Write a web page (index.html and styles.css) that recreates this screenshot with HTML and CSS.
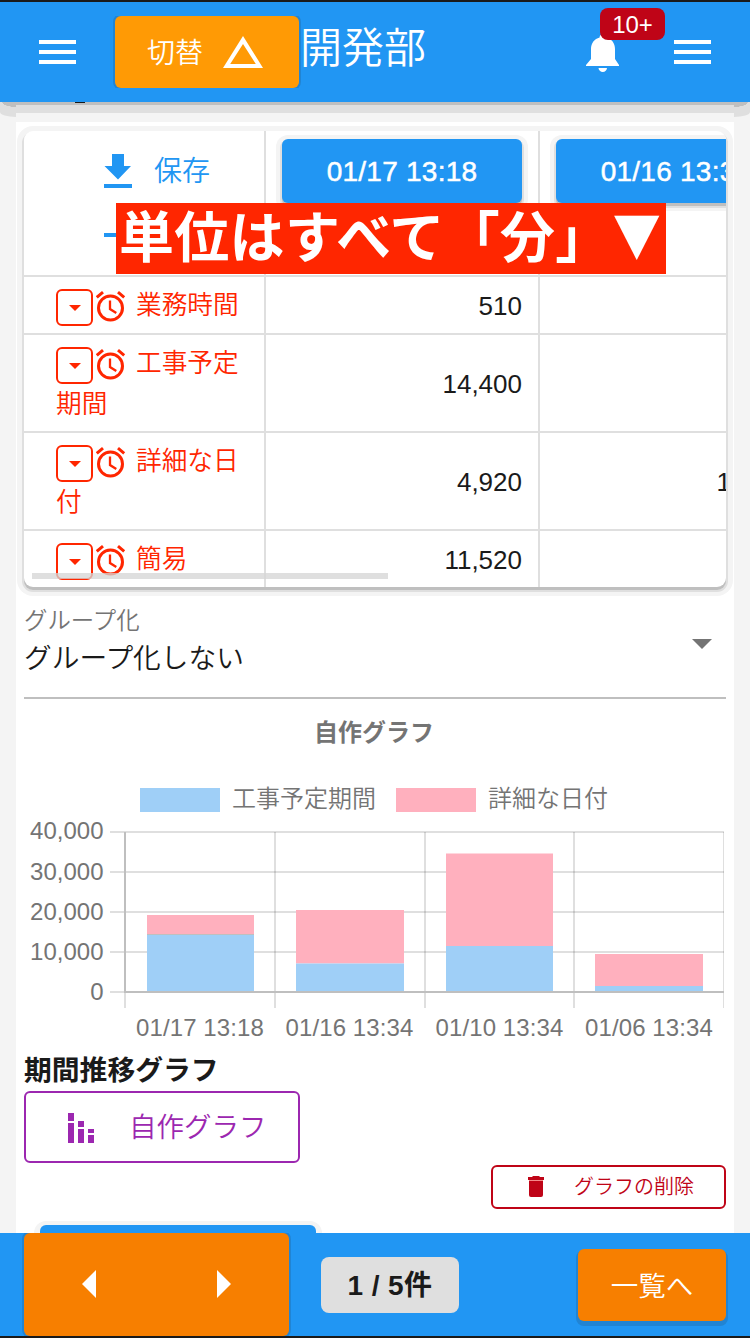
FILE: index.html
```html
<!DOCTYPE html>
<html lang="ja">
<head>
<meta charset="utf-8">
<title>開発部</title>
<link rel="stylesheet" href="styles.css">
</head>
<body>
<svg class="defs" aria-hidden="true">
  <symbol id="alarm" viewBox="0 0 30 32">
    <path d="M.8 7.400 7 2.200M28.200 7.400 22 2.200" fill="none" stroke="currentColor" stroke-width="3"/>
    <circle cx="14.500" cy="18" r="12" fill="none" stroke="currentColor" stroke-width="3"/>
    <path d="M14 10.500v8.500l6.300 3.900" fill="none" stroke="currentColor" stroke-width="2.300"/>
  </symbol>
  <symbol id="caret" viewBox="0 0 12 6"><path d="M0 0h12L6 6z" fill="currentColor"/></symbol>
  <symbol id="burger" viewBox="0 0 37 24"><path d="M0 0h37v4H0zM0 10h37v4H0zM0 20h37v4H0z" fill="currentColor"/></symbol>
</svg>
<header class="appbar">
  <svg class="burger"><use href="#burger"/></svg>
  <button class="switch"><span>切替</span>
    <svg width="40" height="32" viewBox="0 0 40 32"><path fill="#fff" fill-rule="evenodd" d="M20 0 40 32H0zM20 8 7.2 28H32.8z"/></svg>
  </button>
  <h1 class="title">開発部</h1>
  <div class="bell">
    <svg width="34" height="40" viewBox="0 0 34 40"><path fill="#fff" d="M17 0c-2 0-3.4 1.5-3.4 3.4C8.4 4.8 5 9 5 15v10L0 31v1h33v-1l-4-6V15c0-6-3.400-10.200-8.600-11.600C20.400 1.500 19 0 17 0zM12.500 34h8.500c0 2-2 4-4.200 4s-4.300-2-4.300-4z"/></svg>
    <span class="badge">10+</span>
  </div>
  <svg class="burger"><use href="#burger"/></svg>
</header>
<main class="page">
  <div class="edge"><i class="clip"></i></div>
  <section class="card">
    <div class="table-wrap">
      <div class="table">
        <div class="cell head tools">
          <a class="tool"><svg width="28" height="34" viewBox="0 0 28 34"><path fill="currentColor" d="M8 0h12v12h7L14 25.500.500 12H8zM0 30h28v4H0z"/></svg><span>保存</span></a>
          <a class="tool"><svg width="28" height="34" viewBox="0 0 28 34"><path fill="currentColor" d="M0 15h28v4H0z"/></svg></a>
        </div>
        <div class="cell head"><button class="date">01/17 13:18</button></div>
        <div class="cell head"><button class="date">01/16 13:34</button></div>

        <div class="cell label"><span class="drop"><svg><use href="#caret"/></svg></span><svg class="alarm"><use href="#alarm"/></svg>業務時間</div>
        <div class="cell num">510</div><div class="cell num"></div>

        <div class="cell label"><span class="drop"><svg><use href="#caret"/></svg></span><svg class="alarm"><use href="#alarm"/></svg>工事予定期間</div>
        <div class="cell num">14,400</div><div class="cell num"></div>

        <div class="cell label"><span class="drop"><svg><use href="#caret"/></svg></span><svg class="alarm"><use href="#alarm"/></svg>詳細な日付</div>
        <div class="cell num">4,920</div><div class="cell num">13,320</div>

        <div class="cell label"><span class="drop"><svg><use href="#caret"/></svg></span><svg class="alarm"><use href="#alarm"/></svg>簡易</div>
        <div class="cell num">11,520</div><div class="cell num"></div>
      </div>
      <i class="scrollbar"></i>
    </div>
    <strong class="banner">単位はすべて「分」<span class="down">▼</span></strong>

    <div class="select">
      <div><div class="select-label">グループ化</div><div class="select-value">グループ化しない</div></div>
      <svg width="20" height="10" viewBox="0 0 20 10"><path fill="#747474" d="M0 0h20L10 10z"/></svg>
    </div>

    <svg class="chart" viewBox="24 708 702 340">
      <text class="chart-title" x="374" y="741" text-anchor="middle">自作グラフ</text>
      <path class="blue" d="M140 788h80v24h-80z"/><text x="232" y="807">工事予定期間</text>
      <path class="pink" d="M396 788h80v24h-80z"/><text x="488" y="807">詳細な日付</text>
      <g class="grid">
        <path d="M110 832H724M110 872H724M110 912H724M110 952H724M110 992H724"/>
        <path d="M125 832V1008M275 832V1008M425 832V1008M574 832V1008"/>
        <path d="M723.500 832V1008" stroke-width="1"/>
      </g>
      <path class="pink" d="M147 915h107v19h-107zM296 910h108v53.500h-108zM446 853.500h107v92.500h-107zM595 954h108v32h-108z"/>
      <path class="blue" d="M147 934.500h107V991h-107zM296 963.500h108V991h-108zM446 946h107v45h-107zM595 986h108v5h-108z"/>
      <path d="M147 934.500h107" stroke="#bfbfbf" stroke-width="1"/>
      <path d="M125 832V992H724" fill="none" stroke="#bfbfbf" stroke-width="2"/>
      <g text-anchor="end">
        <text x="103.500" y="839">40,000</text><text x="103.500" y="880">30,000</text><text x="103.500" y="920">20,000</text><text x="103.500" y="960">10,000</text><text x="103.500" y="1000">0</text>
      </g>
      <g text-anchor="middle" class="ticks">
        <text x="200" y="1036">01/17 13:18</text><text x="349.500" y="1036">01/16 13:34</text><text x="499.500" y="1036">01/10 13:34</text><text x="649" y="1036">01/06 13:34</text>
      </g>
    </svg>

    <h2 class="subtitle">期間推移グラフ</h2>
    <button class="graph">
      <svg width="26" height="30" viewBox="0 0 26 30"><path fill="currentColor" d="M0 0h6v8H0zM0 10h6v20H0zM10 8h6v6h-6zM10 16h6v14h-6zM20 16h6v4h-6zM20 22h6v8h-6z"/></svg><span>自作グラフ</span></button>
    <button class="delete">
      <svg width="16" height="21" viewBox="0 0 16 21"><path fill="currentColor" d="M5 0h6l1 1h4v3H0V1h4z"/><path fill="#f58a8a" d="M1 4h14v1H1z"/><path fill="currentColor" d="M1 5h14v14q0 2-2 2H3q-2 0-2-2z"/></svg><span>グラフの削除</span></button>
    <div class="next-button"></div>
  </section>
</main>
<footer class="bottombar">
  <div class="pager">
    <svg width="14" height="28" viewBox="0 0 14 28"><path fill="#fff" d="M14 0v28L0 14z"/></svg>
    <svg width="14" height="28" viewBox="0 0 14 28"><path fill="#fff" d="M0 0v28l14-14z"/></svg>
  </div>
  <div class="count">1 / 5件</div>
  <button class="list">一覧へ</button>
</footer>
</body>
</html>
```
FILE: styles.css
```css
* { box-sizing: border-box; }
body {
  margin: 0; width: 750px; height: 1338px; overflow: hidden;
  display: flex; flex-direction: column;
  font-family: "Liberation Sans", "Noto Sans CJK JP", sans-serif;
  font-weight: 350; color: #1a1a1a; background: #f4f4f4;
}
svg { display: block; flex: none; }
button {
  font: inherit; border: 0; padding: 0; margin: 0; background: none;
  display: flex; align-items: center; white-space: nowrap;
}
.defs { position: absolute; width: 0; height: 0; }

/* top bar */
.appbar {
  height: 102px; flex: none; border-top: 2px solid #1a1a1a; background: #2196f3; color: #fff;
  display: flex; align-items: flex-start; padding-left: 39px;
}
.burger { width: 37px; height: 24px; margin-top: 38px; }
.switch {
  width: 184px; height: 72px; margin: 14px 0 0 39px; padding: 0 36px 0 32px; justify-content: space-between;
  border-radius: 6px; background: #ff9a05; color: #fff; font-size: 28px;
  box-shadow: 0 0 0 2px #2184d3; clip-path: inset(0 -3px);
}
.switch span { padding-bottom: 3px; }
.title { margin: 17px 0 0 1px; font-size: 42px; line-height: 60px; font-weight: 350; }
.bell { position: relative; width: 34px; margin: 32px 54px 0 160px; }
.badge {
  position: absolute; left: 14px; top: -26px; width: 65px; height: 32px; border-radius: 8px;
  background: #bf0417; font-size: 24px; line-height: 33px; text-align: center;
}

/* page */
.page { flex: 1; min-height: 0; overflow: hidden; display: flex; flex-direction: column; }
.edge {
  height: 20px; flex: none; padding-left: 75px; position: relative;
  background: linear-gradient(#bfbfbf 3px, #dfdfdf 3px 11px, #f4f4f4 11px) 16px 0 / 718px 20px no-repeat;
}
.edge::before, .edge::after { content: ""; position: absolute; top: 0; width: 16px; height: 15px; }
.edge::before {
  left: 0; border-radius: 0 0 0 16px / 0 0 0 5px;
  background: radial-gradient(ellipse 14px 5px at 16px 0, #bfbfbf 96%, #dfdfdf);
}
.edge::after {
  right: 0; border-radius: 0 0 16px 0 / 0 0 5px 0;
  background: radial-gradient(ellipse 14px 5px at 0 0, #bfbfbf 96%, #dfdfdf);
}
.clip { display: block; width: 10px; height: 1px; background: #1a1a1a; }
.card {
  position: relative; margin: 0 16px; padding: 9px 8px 0; height: 1111px; flex: none; background: #fff;
  display: flex; flex-direction: column;
}

/* table */
.table-wrap {
  position: relative; height: 456px; flex: none; overflow: hidden; border-radius: 9px; background: #fff;
  box-shadow: 0 3px 0 0 #bfbfbf, 0 3px 0 2px #dfdfdf, 0 2px 0 7px #f4f4f4;
}
.table { width: 790px; display: grid; grid-template-columns: 242px 274px 274px; grid-template-rows: 146px 58px 98px 98px 56px; }
.cell { border-right: 2px solid #dfdfdf; border-bottom: 2px solid #dfdfdf; }
.cell:nth-last-child(-n+3) { border-bottom: 0; }
.head { padding: 8px 16px; }
.tools { padding-left: 80px; color: #2196f3; font-size: 28px; }
.tool { height: 64px; display: flex; align-items: center; gap: 22px; }
.tool span { padding-bottom: 4px; }
.date {
  width: 240px; height: 64px; justify-content: center; padding-top: 1px; border-radius: 6px; background: #2196f3; color: #fff;
  font-size: 28px; letter-spacing: .25px; -webkit-text-stroke: .5px #fff;
  box-shadow: 0 3px 0 0 #bfbfbf, 0 3px 0 2px #dfdfdf, 0 2px 0 6px #f4f4f4;
}
.label { padding: 8px 15px 0 32px; font-size: 25.700px; line-height: 40.500px; color: #ff2600; }
.drop {
  display: inline-flex; align-items: center; justify-content: center; vertical-align: top;
  width: 37px; height: 37px; margin-top: 4px; border: 2px solid #ff2600; border-radius: 6px;
}
.drop svg { width: 12px; height: 6px; }
.alarm { display: inline-block; vertical-align: top; width: 30px; height: 32px; margin: 5px 10px 0 3px; }
.num { display: flex; align-items: center; justify-content: flex-end; padding: 2px 16px 0 0; font-size: 26px; }
.scrollbar { position: absolute; left: 8px; bottom: 8px; width: 356px; height: 6px; background: rgba(213, 213, 213, .76); }
.banner {
  position: absolute; left: 100px; top: 81px; width: 550px; height: 71px; padding-left: 3px;
  background: #ff2600; color: #fff; font-family: "Noto Sans CJK JP", sans-serif; font-size: 55px; line-height: 60px; letter-spacing: .3px; white-space: nowrap;
}
.down { display: inline-block; font-size: 48px; line-height: 50px; position: relative; left: 2px; top: -4px; transform: scaleY(1.13); }

/* group select */
.select {
  height: 112px; flex: none; border-bottom: 2px solid #bfbfbf; padding: 16px 14px 0 0;
  display: flex; justify-content: space-between;
}
.select-label { font-size: 23.400px; line-height: 36px; color: #747474; }
.select-value { font-size: 27.700px; line-height: 40px; }
.select svg { margin-top: 36px; }

/* chart */
.chart { width: 702px; height: 340px; margin-top: 9px; }
.chart text { font-size: 24px; fill: #747474; }
.chart .chart-title { font-weight: 700; }
.ticks text { letter-spacing: .1px; }
.blue { fill: #9fcff7; }
.pink { fill: #ffb0be; }
.grid { stroke: rgba(0, 0, 0, .125); stroke-width: 2; }

.subtitle { margin: 2px 0 0; padding-top: 1px; font-size: 27.800px; line-height: 40px; height: 41px; font-weight: 700; flex: none; }
.graph {
  width: 276px; height: 72px; flex: none; padding-left: 42px; gap: 35px; padding-top: 1px;
  border: 2px solid #9c27b0; border-radius: 6px; color: #9c27b0; font-size: 27.500px;
}
.graph span { padding-bottom: 5px; }
.delete {
  align-self: flex-end; width: 235px; height: 44px; flex: none; margin-top: 2px; padding-left: 35px; gap: 30px;
  border: 2px solid #bf0417; border-radius: 6px; color: #bf0417; font-size: 20px;
}
.delete svg { margin-bottom: 2px; }
.delete span { padding-bottom: 3px; }
.next-button {
  width: 276px; height: 72px; flex: none; margin: 16px 0 0 16px; border-radius: 6px; background: #2196f3;
  box-shadow: 0 2px 0 6px #f4f4f4;
}

/* bottom bar */
.bottombar {
  position: relative; height: 105px; flex: none; border-bottom: 2px solid #1a1a1a; background: #2196f3;
  display: flex; padding: 0 24px;
}
.pager {
  width: 265px; height: 103px; padding: 0 58px; display: flex; align-items: center; justify-content: space-between;
  border-radius: 6px; background: #f77f00; box-shadow: 0 0 0 2px #2184d3; clip-path: inset(0 -3px);
}
.pager svg { margin-bottom: 1px; }
.count {
  width: 138px; height: 56px; margin: 24px 0 0 32px; border-radius: 8px; background: #dfdfdf;
  font-size: 28px; letter-spacing: .4px; line-height: 58px; font-weight: 700; text-align: center;
}
.list {
  width: 148px; height: 72px; margin: 16px 0 0 auto; padding-bottom: 3px; justify-content: center; border-radius: 6px;
  background: #f77f00; color: #fff; font-size: 27.500px; box-shadow: 0 3px 0 2px #2184d3;
}
```
